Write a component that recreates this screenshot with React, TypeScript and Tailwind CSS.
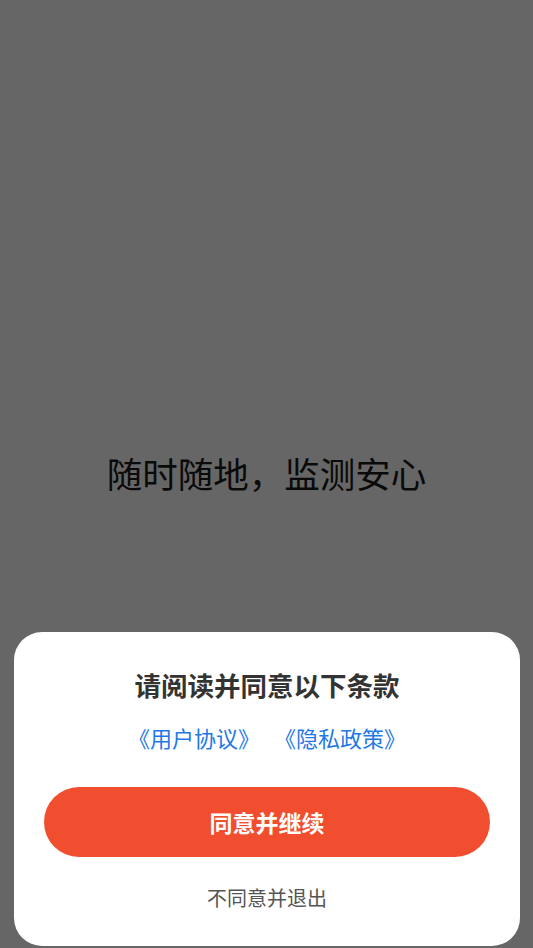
export default function App() {
  return (
    <div
      className="relative h-[948px] w-full overflow-hidden bg-[#666666]"
      style={{ fontFamily: '"Noto Sans CJK SC", "Noto Sans", sans-serif' }}
    >
      {/* Splash slogan */}
      <div className="flex h-full items-center justify-center pb-[2px]">
        <p className="text-[35.5px] leading-none text-[#0a0a0a]">随时随地，监测安心</p>
      </div>

      {/* Terms sheet */}
      <div className="absolute bottom-[2px] left-[14px] right-[13px] top-[632px] flex flex-col items-center rounded-[28px] bg-white px-[30px]">
        <h2 className="mt-[38px] text-[26.5px] font-bold leading-[30px] text-[#333333]">请阅读并同意以下条款</h2>
        <div className="mt-[22px] flex items-center gap-[14px] text-[22px] leading-[30px] text-[#1e78e6]">
          <a>《用户协议》</a>
          <a>《隐私政策》</a>
        </div>
        <button className="mt-[35px] flex h-[70px] w-full items-center justify-center rounded-full bg-[#f04e2e] text-[23px] font-bold text-white">
          同意并继续
        </button>
        <button className="mt-[27px] text-[20px] leading-[28px] text-[#555555]">不同意并退出</button>
      </div>
    </div>
  )
}
